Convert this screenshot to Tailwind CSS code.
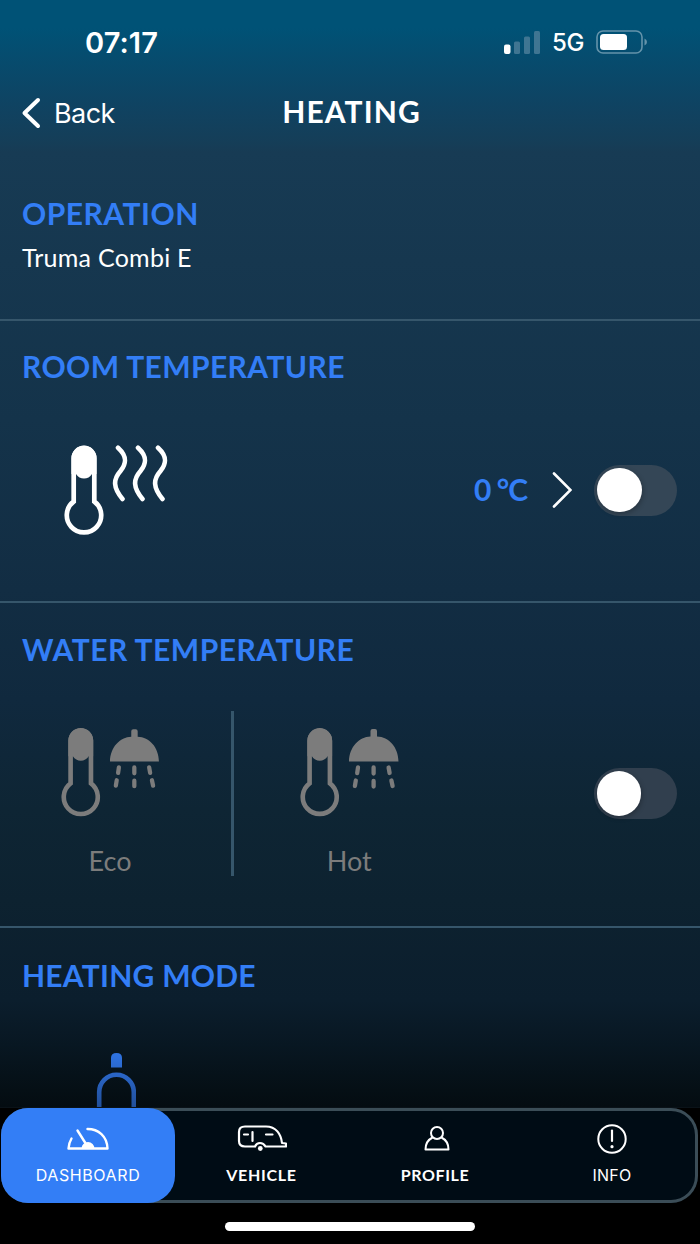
<!DOCTYPE html>
<html lang="en">
<head>
<meta charset="utf-8">
<title>Heating</title>
<script src="https://cdn.jsdelivr.net/npm/@tailwindcss/browser@4"></script>
</head>
<body class="bg-black">
<svg class="hidden">
  <symbol id="thermo" viewBox="0 0 40 90">
    <path d="M9.700 56.500V13.500a10.300 10.300 0 0 1 20.600 0V56.500a17.200 17.200 0 1 1-20.600 0Z" fill="none" stroke="currentColor" stroke-width="4.700"/>
    <path d="M7.500 29V13a12.500 12.500 0 0 1 25 0V29H28Q25 33.500 20 33.500T12 29Z" fill="currentColor"/>
  </symbol>
  <symbol id="shower" viewBox="0 0 50 62">
    <path d="M0 34.500C.3 20 10 10 21.500 9.500V4Q21.500 2 23.500 2h2.500Q28 2 28 4V9.500C40 10 49.200 20 49.500 34.500Z" fill="currentColor"/>
    <path d="M9 40.500l-.8 5.500M6.800 53.500l-.9 5.500M24.600 40.500v6M24.600 54v5.500M39.600 40.500l1 5.500M42.400 53.500l1.200 5.500" fill="none" stroke="currentColor" stroke-width="4.300" stroke-linecap="round"/>
  </symbol>
</svg>
<div class="w-[700px] h-[1244px] overflow-hidden flex flex-col font-['Lato',sans-serif] text-white">
  <div class="h-[1107px] shrink-0 overflow-hidden flex flex-col bg-[linear-gradient(180deg,#005276_0px,#005276_28px,#074b6d_62px,#0f4362_105px,#153e58_142px,#173b54_152px,#16374f_260px,#14334a_420px,#122d43_590px,#10293e_700px,#0e2534_810px,#0d2230_900px,#0b1e2d_1000px,#081722_1045px,#050f15_1090px,#040c11_1107px)]">
    <header class="h-[150px] shrink-0">
      <div class="h-[84px] flex items-center justify-between pl-[85px] pr-[52px] font-['Inter',sans-serif]">
        <span class="text-[29px] font-semibold leading-none tracking-[0.1px]">07:17</span>
        <div class="flex items-center">
          <svg class="w-9 h-[23px]" viewBox="0 0 36 23"><g fill="#3f7592"><rect x="10" y="10.500" width="6" height="12.500" rx="1.500"/><rect x="20" y="5.500" width="6" height="17.500" rx="1.500"/><rect x="30" y="0" width="6" height="23" rx="1.500"/></g><rect x="0" y="13.500" width="6.500" height="9.500" rx="2" fill="#fff"/></svg>
          <span class="ml-3 pt-[2px] text-[24px] font-medium leading-none tracking-[-0.4px]">5G</span>
          <svg class="ml-3 w-[52px] h-6" viewBox="0 0 52 24"><rect x="1" y="1" width="45" height="22" rx="6" fill="none" stroke="#6493aa" stroke-width="1.600"/><rect x="4" y="4" width="27" height="16" rx="3.500" fill="#fff"/><path d="M48.500 8.500q2.500 1 2.500 3.500t-2.500 3.500z" fill="#6493aa"/></svg>
        </div>
      </div>
      <div class="h-[56px] grid grid-cols-3 items-center px-[21px]">
        <div class="flex items-center gap-[13px] pt-[2px] font-['Inter',sans-serif]">
          <svg class="w-[20px] h-8" viewBox="0 0 20 32"><path d="M17 3 3.500 16 17 29" fill="none" stroke="#fff" stroke-width="4" stroke-linecap="round" stroke-linejoin="round"/></svg>
          <span class="text-[27px] leading-none tracking-[-0.6px]">Back</span>
        </div>
        <h1 class="pb-[3px] pl-[3px] text-center text-[30px] font-bold leading-none tracking-[1.100px]">HEATING</h1>
      </div>
    </header>
    <section class="h-[171px] shrink-0 pt-[48px] px-[22px] border-b-[2px] border-[#36566b]">
      <h2 class="text-[30px] leading-[30px] font-bold tracking-[0.500px] text-[#337ef6]">OPERATION</h2>
      <p class="mt-[16px] text-[25px] leading-[26px] tracking-[0.25px]">Truma Combi E</p>
    </section>
    <section class="h-[282px] shrink-0 pt-[30px] px-[22px] border-b-[2px] border-[#36566b]">
      <h2 class="text-[30px] leading-[30px] font-bold tracking-[0.400px] text-[#337ef6]">ROOM TEMPERATURE</h2>
      <div class="mt-[64px] pl-[42px] pr-[1px] flex items-start">
        <svg class="w-10 h-[90px]"><use href="#thermo"/></svg>
        <svg class="ml-[6px] w-[60px] h-[58px]" viewBox="0 0 60 58"><g fill="none" stroke="#fff" stroke-width="4.600" stroke-linecap="round"><path id="wave" d="M8 2.800C17 11 17 18 10.500 26C3 34.500 3 42.500 12.500 54"/><use href="#wave" x="20"/><use href="#wave" x="40"/></g></svg>
        <div class="ml-auto h-[90px] flex items-center">
          <span class="pb-[2px] text-[30px] leading-none font-bold tracking-[-1px] text-[#337ef6]">0 °C</span>
          <svg class="ml-[25px] w-5 h-9" viewBox="0 0 20 36"><path d="M2 1.500 18.500 18 2 34.500" fill="none" stroke="#fff" stroke-width="2.600" stroke-linecap="round"/></svg>
          <div class="ml-[22px] w-[83px] h-[51px] rounded-full bg-[#344656] p-[3px] flex items-center"><div class="size-[44.500px] rounded-full bg-white shadow-[1px_2px_5px_rgba(0,0,0,0.25)]"></div></div>
        </div>
      </div>
    </section>
    <section class="h-[325px] shrink-0 pt-[31px] pl-[22px] pr-[23.500px] border-b-[2px] border-[#36566b]">
      <h2 class="text-[30px] leading-[30px] font-bold tracking-[0.480px] text-[#337ef6]">WATER TEMPERATURE</h2>
      <div class="mt-[47px] h-[165px] flex text-[#7c7c7c]">
        <div class="w-[209px] pt-[16px] pl-[39px] pr-[72px] flex flex-col">
          <div class="flex gap-[9px]"><svg class="w-10 h-[90px]"><use href="#thermo"/></svg><svg class="w-[50px] h-[62px]"><use href="#shower"/></svg></div>
          <span class="mt-[29px] text-center text-[27px] leading-[30px]">Eco</span>
        </div>
        <div class="w-[2.500px] bg-[#36566b]"></div>
        <div class="w-[209px] pt-[16px] pl-[66.500px] pr-[44px] flex flex-col">
          <div class="flex gap-[9px]"><svg class="w-10 h-[90px]"><use href="#thermo"/></svg><svg class="w-[50px] h-[62px] shrink-0"><use href="#shower"/></svg></div>
          <span class="mt-[29px] text-center text-[27px] leading-[30px]">Hot</span>
        </div>
        <div class="ml-auto self-center w-[83px] h-[51px] rounded-full bg-[#313f4e] p-[3px] flex items-center"><div class="size-[44.500px] rounded-full bg-white shadow-[1px_2px_5px_rgba(0,0,0,0.25)]"></div></div>
      </div>
    </section>
    <section class="grow pt-[32px] px-[22px]">
      <h2 class="text-[30px] leading-[30px] font-bold tracking-[0.250px] text-[#337ef6]">HEATING MODE</h2>
      <svg class="mt-[62px] ml-[74px] w-10 h-[55px]" viewBox="0 0 40 55"><defs><linearGradient id="bottle" gradientUnits="userSpaceOnUse" x1="0" y1="0" x2="0" y2="54"><stop stop-color="#2f74e4"/><stop offset="1" stop-color="#22509c"/></linearGradient></defs><path d="M15 15.500V6q0-5 5.500-5T26 6v9.500Z" fill="url(#bottle)"/><path d="M3.200 57V40a17.300 17.300 0 0 1 34.600 0V57" fill="none" stroke="url(#bottle)" stroke-width="4.600"/></svg>
    </section>
  </div>
  <footer class="grow bg-black border-t border-[#0a1218]">
    <nav class="ml-[1px] w-[697px] h-[95px] rounded-[27px] bg-[#000c15] ring-[3px] ring-inset ring-[#3b4d57] flex text-[16px] leading-[18px]">
      <div class="w-[174px] rounded-[27px] bg-[#337ef6] flex flex-col items-center pt-[19px] font-['Inter',sans-serif]">
        <svg class="w-[42px] h-[24px]" viewBox="0 0 42 24"><g fill="none" stroke="#fff" stroke-width="2.400" stroke-linecap="round" stroke-linejoin="round"><path d="M4.500 11.500Q1.800 16 1.500 21.500H40.500C40 9 31.500 2 20.500 2"/><path d="M10.500 3.500 19 17"/></g><path d="M14.500 21.500a6.500 6.500 0 0 1 13 0Z" fill="#fff"/></svg>
        <span class="mt-[15px] tracking-[0.600px]">DASHBOARD</span>
      </div>
      <div class="w-[173px] flex flex-col items-center pt-[17px] font-bold">
        <svg class="w-[50px] h-[26px]" viewBox="0 0 50 26"><g fill="none" stroke="#fff" stroke-width="2.200" stroke-linecap="round" stroke-linejoin="round"><path d="M18 21.500H8Q2 21.500 2 16V7Q2 1.500 8 1.500H29C39 1.500 44 9 45 18L49 18.500V21.500H28.500Q26.500 18 23 18T18 21.500"/><path d="M7 9.500h4M15.500 7V16M29 9.500h6.500"/></g><circle cx="23.300" cy="23.500" r="2.400" fill="#fff"/></svg>
        <span class="mt-[15px] tracking-[0.700px]">VEHICLE</span>
      </div>
      <div class="w-[174px] flex flex-col items-center pt-[17px] font-bold">
        <svg class="ml-[3px] w-[26px] h-[26px]" viewBox="0 0 26 26"><g fill="none" stroke="#fff" stroke-width="2" stroke-linejoin="round"><circle cx="13" cy="8" r="6"/><path d="M8.500 12.500Q1.500 16 1.500 24.500H24.500Q24.500 16 17.500 12.500"/></g></svg>
        <span class="mt-[15px] tracking-[0.600px]">PROFILE</span>
      </div>
      <div class="grow pl-[4px] flex flex-col items-center pt-[16px] font-['Inter',sans-serif]">
        <svg class="w-[30px] h-[30px]" viewBox="0 0 30 30"><circle cx="15" cy="15" r="13.700" fill="none" stroke="#fff" stroke-width="2"/><path d="M15 6.500V17" stroke="#fff" stroke-width="2.200" stroke-linecap="round"/><circle cx="15" cy="22.700" r="1.600" fill="#fff"/></svg>
        <span class="mt-[12px] tracking-[0.300px]">INFO</span>
      </div>
    </nav>
    <div class="mx-auto mt-[19px] w-[250px] h-[9px] rounded-full bg-white"></div>
  </footer>
</div>
</body>
</html>
